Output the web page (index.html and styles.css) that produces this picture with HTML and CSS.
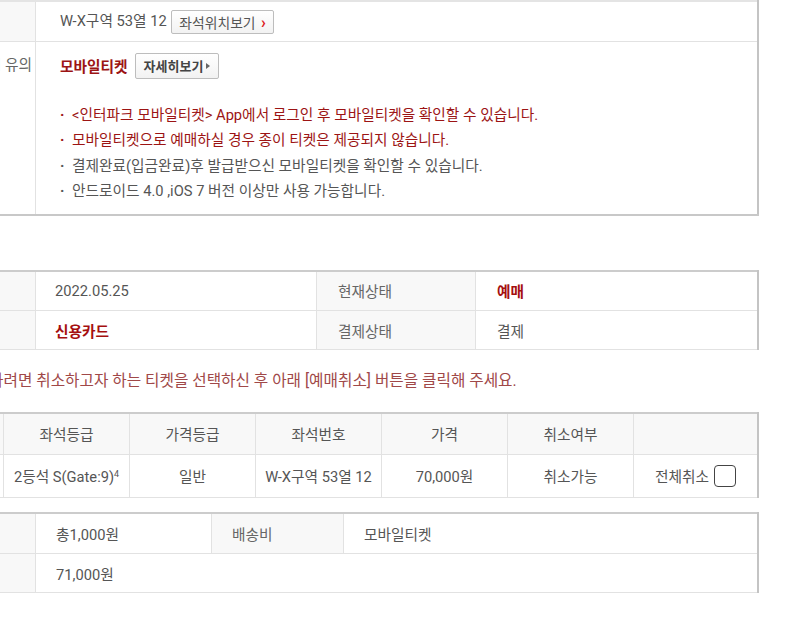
FILE: index.html
```html
<!DOCTYPE html>
<html lang="ko">
<head>
    <meta charset="UTF-8">
    <meta name="viewport" content="width=device-width, initial-scale=1.0">
    <title>예매확인</title>
    <link rel="stylesheet" href="styles.css">
</head>
<body>
    <div class="page">
        <table class="info info-top">
            <colgroup>
                <col class="col-label">
                <col>
            </colgroup>
            <tr class="row-40">
                <th></th>
                <td class="pad-wide">W-X구역 53열 12 <button class="btn-seat">좌석위치보기 <span class="chev">›</span></button></td>
            </tr>
            <tr>
                <th class="label-top">이용시 유의</th>
                <td class="notice-cell">
                    <div class="mobile-head">
                        <strong class="mobile-title">모바일티켓</strong>
                        <button class="btn-detail">자세히보기 <span class="tri"></span></button>
                    </div>
                    <ul class="notes">
                        <li class="red">&lt;인터파크 모바일티켓&gt; App에서 로그인 후 모바일티켓을 확인할 수 있습니다.</li>
                        <li class="red">모바일티켓으로 예매하실 경우 종이 티켓은 제공되지 않습니다.</li>
                        <li>결제완료(입금완료)후 발급받으신 모바일티켓을 확인할 수 있습니다.</li>
                        <li>안드로이드 4.0 ,iOS 7 버전 이상만 사용 가능합니다.</li>
                    </ul>
                </td>
            </tr>
        </table>

        <table class="info info-status">
            <colgroup>
                <col class="col-label">
                <col class="col-v1">
                <col class="col-l2">
                <col>
            </colgroup>
            <tr class="row-40">
                <th>예매일</th>
                <td>2022.05.25</td>
                <th>현재상태</th>
                <td><strong class="state">예매</strong></td>
            </tr>
            <tr class="row-39">
                <th>결제수단</th>
                <td><strong class="state">신용카드</strong></td>
                <th>결제상태</th>
                <td>결제</td>
            </tr>
        </table>

        <p class="cancel-guide">예매를 취소하려면 취소하고자 하는 티켓을 선택하신 후 아래 [예매취소] 버튼을 클릭해 주세요.</p>

        <table class="info seats">
            <colgroup>
                <col class="col-sel">
                <col class="col-seat">
                <col class="col-seat">
                <col class="col-seat">
                <col class="col-seat">
                <col class="col-seat">
                <col>
            </colgroup>
            <tr class="row-41 head">
                <th></th>
                <th>좌석등급</th>
                <th>가격등급</th>
                <th>좌석번호</th>
                <th>가격</th>
                <th>취소여부</th>
                <th></th>
            </tr>
            <tr class="row-43">
                <td></td>
                <td>2등석 S(Gate:9)<sup>4</sup></td>
                <td>일반</td>
                <td>W-X구역 53열 12</td>
                <td>70,000원</td>
                <td>취소가능</td>
                <td><label class="all-cancel">전체취소 <input type="checkbox" class="box"></label></td>
            </tr>
        </table>

        <table class="info info-pay">
            <colgroup>
                <col class="col-label">
                <col class="col-fee">
                <col class="col-l3">
                <col>
            </colgroup>
            <tr class="row-41">
                <th>예매수수료</th>
                <td>총1,000원</td>
                <th>배송비</th>
                <td>모바일티켓</td>
            </tr>
            <tr class="row-39">
                <th>총결제금액</th>
                <td colspan="3">71,000원</td>
            </tr>
        </table>
    </div>
</body>
</html>
```

FILE: styles.css
```css
body {
    margin: 0;
    background: #fff;
    font-family: Roboto, "Noto Sans CJK KR", sans-serif;
    font-size: 14.7px;
    color: #555;
    overflow: hidden;
}

.page {
    width: 849px;
    margin-left: -90px;
}

.info {
    width: 100%;
    border-collapse: collapse;
    table-layout: fixed;
    border-top: 2px solid #ccc;
    border-right: 2px solid #c4c4c4;
    border-bottom: 1px solid #c8c8c8;
}

.info th,
.info td {
    border: 1px solid #e2e2e2;
    padding: 0 0 0 20px;
    text-align: left;
    font-weight: normal;
    vertical-align: middle;
}

.info th {
    background: #f8f8f8;
    color: #666;
}

.info td {
    background: #fff;
}

.col-label { width: 125px; }
.col-v1 { width: 281px; }
.col-l2 { width: 159px; }
.col-fee { width: 176px; }
.col-l3 { width: 132px; }
.col-sel { width: 93px; }
.col-seat { width: 126px; }

.row-40 { height: 40px; }
.row-39 { height: 39px; }
.row-41 { height: 41px; }
.row-43 { height: 43px; }

.info-top {
    border-top: 2px solid #e4e4e4;
    border-bottom: 2px solid #c8c8c8;
}

.info-top td.pad-wide {
    padding-left: 24px;
}

.label-top {
    vertical-align: top !important;
    text-align: right !important;
    padding: 11px 3px 0 0 !important;
    background: #fff !important;
}

.btn-seat,
.btn-detail {
    font-family: inherit;
    border: 1px solid #bdbdbd;
    border-radius: 2px;
    background: linear-gradient(#fff, #f2f2f2);
    color: #555;
    margin-left: 3px;
    cursor: pointer;
    vertical-align: middle;
}

.btn-seat {
    height: 24px;
    font-size: 13.8px;
    padding: 0 7px 0 7px;
    margin-left: 1px;
}

.chev {
    color: #d22;
    font-weight: bold;
    font-size: 16px;
    margin-left: 2px;
}

.notice-cell {
    padding: 11px 0 9px 24px !important;
    vertical-align: top;
}

.mobile-head {
    display: flex;
    align-items: center;
    gap: 4px;
}

.mobile-title {
    color: #9c1414;
    font-weight: bold;
}

.btn-detail {
    height: 26px;
    font-size: 13px;
    font-weight: bold;
    color: #444;
    padding: 0 8px 0 8px;
    display: flex;
    align-items: center;
    gap: 3px;
}

.tri {
    display: inline-block;
    width: 0;
    height: 0;
    border-left: 4px solid #666;
    border-top: 3px solid transparent;
    border-bottom: 3px solid transparent;
}

.notes {
    list-style: none;
    margin: 24px 0 0;
    padding: 0;
}

.notes li {
    line-height: 25.5px;
    padding-left: 12px;
    position: relative;
    color: #555;
}

.notes li::before {
    content: "·";
    position: absolute;
    left: 0;
    font-weight: bold;
}

.notes li.red {
    color: #9c1414;
}

.info-status {
    margin-top: 54px;
}

.info-status td,
.info-status th {
    padding-left: 19px;
}

.info-status th:nth-of-type(2),
.info-status td:last-child {
    padding-left: 21px;
}

.state {
    color: #a50f0f;
    font-weight: bold;
}

.cancel-guide {
    margin: 0;
    height: 62px;
    line-height: 62px;
    font-size: 15.7px;
    color: #a04848;
    white-space: nowrap;
    text-indent: 3px;
}

.seats th,
.seats td {
    text-align: center;
    padding: 0;
}

.seats th {
    color: #555;
}

.seats sup {
    font-size: 9px;
    vertical-align: 5px;
}

.all-cancel {
    display: inline-flex;
    align-items: center;
    gap: 5px;
}

.box {
    appearance: none;
    width: 22px;
    height: 22px;
    margin: 0;
    border: 1.5px solid #444;
    border-radius: 4px;
    background: #fff;
}

.info-pay {
    margin-top: 14px;
}

.info-pay td,
.info-pay th {
    padding-left: 20px;
}
```
